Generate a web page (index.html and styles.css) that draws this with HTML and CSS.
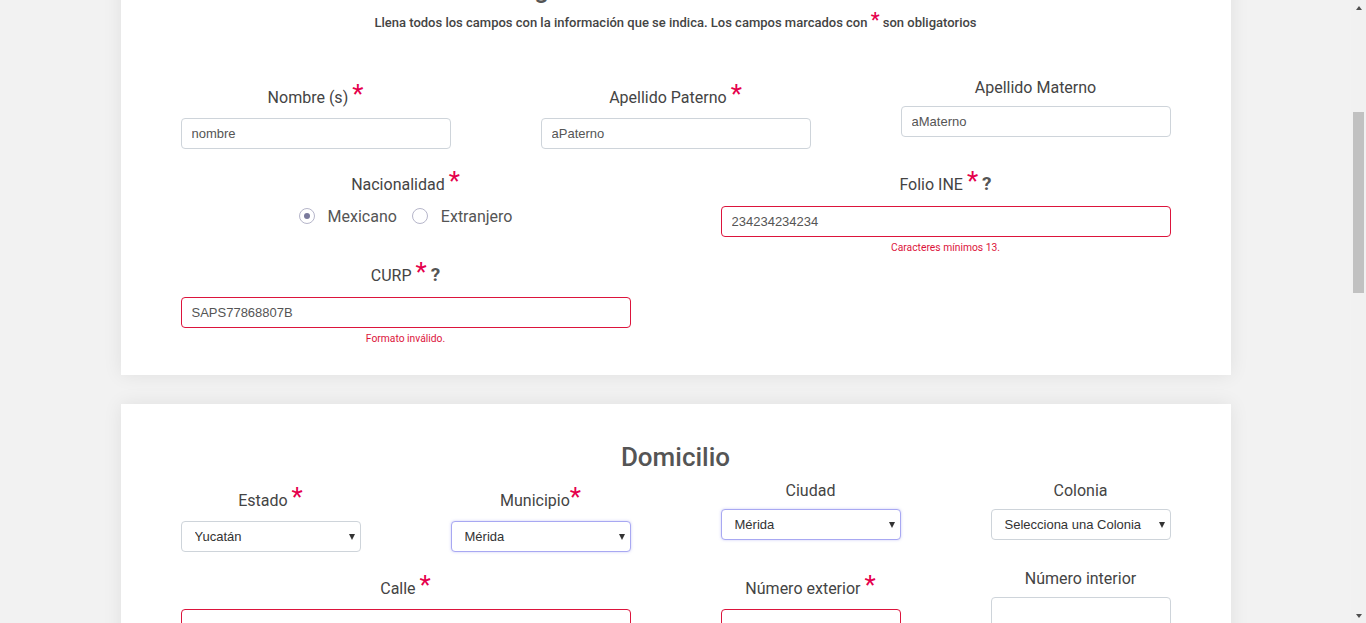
FILE: index.html
```html
<!DOCTYPE html>
<html lang="es">
<head>
<meta charset="utf-8">
<title>Registro</title>
<link rel="stylesheet" href="styles.css">
</head>
<body>
<main class="page">
  <div class="container">
    <section class="card">
      <h2 class="card-title">Registro de Datos Personales</h2>
      <p class="subtitle">Llena todos los campos con la información que se indica. Los campos marcados con <span class="req-sm">*</span> son obligatorios</p>

      <div class="row row-3 first-row">
        <div class="group">
          <label class="label">Nombre (s) <span class="req">*</span></label>
          <input class="field" type="text" value="nombre">
        </div>
        <div class="group">
          <label class="label">Apellido Paterno <span class="req">*</span></label>
          <input class="field" type="text" value="aPaterno">
        </div>
        <div class="group">
          <label class="label">Apellido Materno</label>
          <input class="field" type="text" value="aMaterno">
        </div>
      </div>

      <div class="row row-2">
        <div class="group">
          <label class="label">Nacionalidad <span class="req">*</span></label>
          <div class="radios">
            <span class="radio"><span class="dot on"></span>Mexicano</span>
            <span class="radio"><span class="dot"></span>Extranjero</span>
          </div>
        </div>
        <div class="group">
          <label class="label label-help">Folio INE <span class="req">*</span> <span class="help">?</span></label>
          <input class="field invalid" type="text" value="234234234234">
          <div class="err">Caracteres mínimos 13.</div>
        </div>
      </div>

      <div class="row row-2">
        <div class="group">
          <label class="label label-help">CURP <span class="req">*</span> <span class="help">?</span></label>
          <input class="field invalid" type="text" value="SAPS77868807B">
          <div class="err">Formato inválido.</div>
        </div>
      </div>
    </section>

    <section class="card card-address">
      <h2 class="card-title section-title">Domicilio</h2>
      <div class="row row-4">
        <div class="group">
          <label class="label">Estado <span class="req">*</span></label>
          <div class="select"><select><option>Yucatán</option></select></div>
        </div>
        <div class="group">
          <label class="label">Municipio<span class="req">*</span></label>
          <div class="select focus"><select><option>Mérida</option></select></div>
        </div>
        <div class="group">
          <label class="label">Ciudad</label>
          <div class="select focus"><select><option>Mérida</option></select></div>
        </div>
        <div class="group">
          <label class="label">Colonia</label>
          <div class="select"><select><option>Selecciona una Colonia</option></select></div>
        </div>
      </div>
      <div class="row row-4 street-row">
        <div class="group span-2">
          <label class="label">Calle <span class="req">*</span></label>
          <input class="field invalid" type="text" value="">
        </div>
        <div class="group">
          <label class="label">Número exterior <span class="req">*</span></label>
          <input class="field invalid" type="text" value="">
        </div>
        <div class="group">
          <label class="label">Número interior</label>
          <input class="field" type="text" value="">
        </div>
      </div>
    </section>
  </div>
</main>
<aside class="scrollbar">
  <div class="sb-btn"><span class="sb-up"></span></div>
  <div class="sb-track"><div class="sb-thumb"></div></div>
  <div class="sb-btn"><span class="sb-down"></span></div>
</aside>
</body>
</html>
```

FILE: styles.css
```css
html, body {
  margin: 0;
  height: 100%;
}

body {
  display: flex;
  overflow: hidden;
  background: #f2f2f2;
  font-family: Roboto, "Liberation Sans", Arial, sans-serif;
  color: #444;
}

.page {
  flex: 1;
  min-width: 0;
  overflow: hidden;
}

.container {
  width: 1110px;
  margin: -63px auto 0;
}

.card {
  background: #fff;
  box-shadow: 0 0 18px rgba(0, 0, 0, 0.08);
  padding: 37px 60px 31px;
}

.card:first-child {
  padding-bottom: 28px;
}

.card + .card {
  margin-top: 29px;
}

.card-address {
  padding-top: 38px;
}

.card-title {
  margin: 0;
  font-size: 26px;
  font-weight: 500;
  line-height: 31px;
  text-align: center;
  color: #555;
}

.section-title {
  margin-bottom: 8px;
}

.subtitle {
  margin: 3px 0 0;
  text-align: center;
  font-size: 13px;
  font-weight: 500;
  color: #444;
}

.req-sm {
  color: #e5004c;
  font-size: 20px;
}

.first-row {
  margin-top: 46px;
}

.street-row {
  margin-top: 1px;
}

.row {
  display: grid;
  column-gap: 90px;
  align-items: start;
}

.row-3 {
  grid-template-columns: repeat(3, 270px);
}

.row-2 {
  grid-template-columns: 450px 450px;
}

.row-4 {
  grid-template-columns: repeat(4, 180px);
}

.span-2 {
  grid-column: span 2;
}

.group {
  margin-bottom: 16px;
}

.label {
  display: block;
  text-align: center;
  font-size: 16px;
  line-height: 18px;
  padding-top: 1px;
  margin-bottom: 9px;
  color: #444;
}

.label-help {
  margin-bottom: 10px;
}

.req {
  color: #e5004c;
  font-size: 26px;
  line-height: normal;
}

.help {
  font-weight: 700;
  font-size: 19px;
  line-height: normal;
  color: #555;
}

.field {
  display: block;
  width: 100%;
  height: 31px;
  box-sizing: border-box;
  border: 1px solid #ced4da;
  border-radius: 4px;
  padding: 0 10px;
  font: 13px "Liberation Sans", Arial, sans-serif;
  color: #555;
  background: #fff;
  outline: none;
}

.field.invalid {
  border-color: #dc143c;
}

.err {
  height: 0;
  margin-top: 4px;
  margin-bottom: -1px;
  text-align: center;
  font-size: 10.3px;
  line-height: 14px;
  color: #dc143c;
}

.radios {
  display: flex;
  justify-content: center;
  align-items: center;
  height: 22px;
  gap: 15px;
}

.radio {
  display: flex;
  align-items: center;
  gap: 13px;
  font-size: 16px;
  color: #555;
}

.dot {
  width: 16px;
  height: 16px;
  box-sizing: border-box;
  border: 1px solid #b6b6ca;
  border-radius: 50%;
  display: flex;
  align-items: center;
  justify-content: center;
  background: #fff;
}

.dot.on::after {
  content: "";
  width: 6px;
  height: 6px;
  border-radius: 50%;
  background: #7a7a9c;
}

.select {
  position: relative;
}

.select select {
  appearance: none;
  -webkit-appearance: none;
  display: block;
  width: 100%;
  height: 31px;
  box-sizing: border-box;
  border: 1px solid #ced4da;
  border-radius: 4px;
  padding: 0 22px 0 13px;
  font: 13px "Liberation Sans", Arial, sans-serif;
  color: #333;
  background: #fff;
  outline: none;
}

.select.focus select {
  border-color: #a8a8f2;
  box-shadow: 0 0 3px rgba(110, 110, 230, 0.35);
}

.select::after {
  content: "";
  position: absolute;
  right: 6px;
  top: 13px;
  border-left: 3.5px solid transparent;
  border-right: 3.5px solid transparent;
  border-top: 6px solid #333;
  pointer-events: none;
}

.scrollbar {
  width: 15px;
  flex: none;
  height: 100vh;
  background: #f1f1f1;
  display: flex;
  flex-direction: column;
}

.sb-btn {
  height: 15px;
  display: flex;
  align-items: center;
  justify-content: center;
}

.sb-up {
  border-left: 3.5px solid transparent;
  border-right: 3.5px solid transparent;
  border-bottom: 4px solid #505050;
}

.sb-down {
  border-left: 3.5px solid transparent;
  border-right: 3.5px solid transparent;
  border-top: 4px solid #505050;
}

.sb-track {
  flex: 1;
}

.sb-thumb {
  margin: 97px 2px 0;
  height: 181px;
  background: #c1c1c1;
}
```
